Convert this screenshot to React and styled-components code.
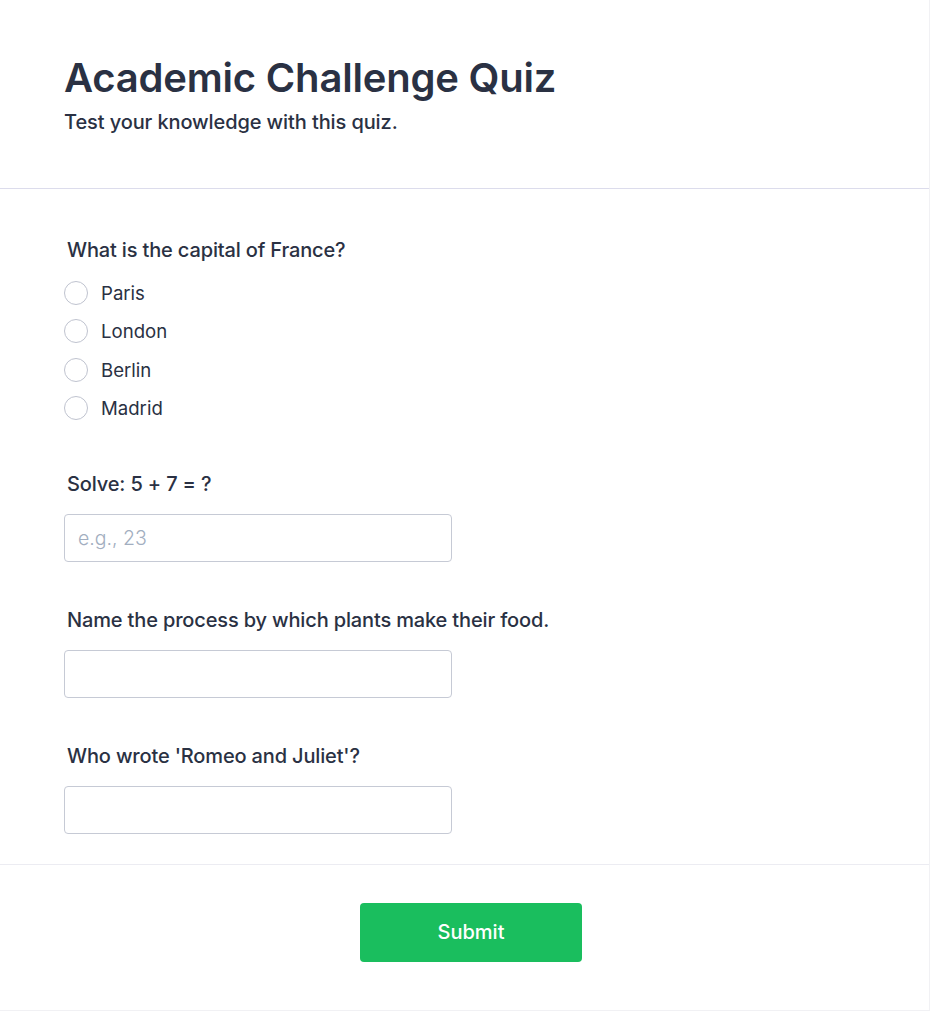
import React from "react";
import styled, { createGlobalStyle } from "styled-components";

const Global = createGlobalStyle`
  html, body { margin: 0; padding: 0; background: #ffffff; }
  body { font-family: Inter, "Noto Sans", Arial, sans-serif; color: #2d3748; }
  * { box-sizing: border-box; }
`;

const Card = styled.div`
  width: 930px;
  min-height: 1011px;
  background: #ffffff;
  border-right: 1px solid #f1f1f4;
  border-bottom: 1px solid #f1f1f4;
  display: flex;
  flex-direction: column;
`;

const Header = styled.header`
  padding: 52px 64px 51px 64px;
  border-bottom: 1px solid #dcdcec;
`;

const Title = styled.h1`
  margin: 0;
  font-size: 40px;
  line-height: 52px;
  font-weight: 600;
  color: #2a3143;
  letter-spacing: -0.2px;
`;

const Subtitle = styled.p`
  margin: 3px 0 0 0;
  font-size: 20px;
  line-height: 30px;
  font-weight: 500;
  letter-spacing: -0.1px;
  color: #2a3143;
`;

const Form = styled.section`
  padding: 46px 64px 30px 64px;
  border-bottom: 1px solid #ececf2;
  display: flex;
  flex-direction: column;
  gap: 43px;
`;

const Question = styled.div`
  display: flex;
  flex-direction: column;
  gap: 15px;
`;

const Label = styled.div`
  font-size: 20px;
  line-height: 30px;
  font-weight: 500;
  letter-spacing: -0.15px;
  color: #2a3143;
  padding-left: 3px;
`;

const Options = styled.div`
  display: flex;
  flex-direction: column;
  gap: 12.33px;
  padding-bottom: 5px;
`;

const Option = styled.label`
  display: flex;
  align-items: center;
  gap: 13px;
  height: 26px;
  font-size: 18.6px;
  font-weight: 400;
  color: #2a3143;
  cursor: pointer;
`;

const Radio = styled.span`
  width: 24px;
  height: 24px;
  border-radius: 50%;
  border: 1.5px solid #bfc3cf;
  background: #fff;
  flex-shrink: 0;
`;

const Input = styled.input`
  width: 388px;
  height: 48px;
  border: 1px solid #c6cad5;
  border-radius: 4px;
  padding: 0 13px;
  font-family: Inter, "Noto Sans", Arial, sans-serif;
  font-size: 19.5px;
  color: #2a3143;
  background: #fff;
  outline: none;
  &::placeholder {
    color: #a2aec0;
    font-weight: 300;
  }
`;

const Footer = styled.footer`
  padding: 38px 0 48px 13px;
  display: flex;
  justify-content: center;
`;

const Button = styled.button`
  width: 222px;
  height: 59px;
  border: none;
  border-radius: 4px;
  background: #1abe5e;
  color: #ffffff;
  font-family: Inter, "Noto Sans", Arial, sans-serif;
  font-size: 20px;
  font-weight: 500;
  cursor: pointer;
`;

const questions = [
  { type: "radio", label: "What is the capital of France?", options: ["Paris", "London", "Berlin", "Madrid"] },
  { type: "text", label: "Solve: 5 + 7 = ?", placeholder: "e.g., 23" },
  { type: "text", label: "Name the process by which plants make their food." },
  { type: "text", label: "Who wrote 'Romeo and Juliet'?" },
];

export default function App() {
  return (
    <>
      <Global />
      <Card>
        <Header>
          <Title>Academic Challenge Quiz</Title>
          <Subtitle>Test your knowledge with this quiz.</Subtitle>
        </Header>
        <Form>
          {questions.map((q, i) => (
            <Question key={i}>
              <Label>{q.label}</Label>
              {q.type === "radio" ? (
                <Options>
                  {q.options.map((o) => (
                    <Option key={o}>
                      <Radio />
                      {o}
                    </Option>
                  ))}
                </Options>
              ) : (
                <Input placeholder={q.placeholder || ""} />
              )}
            </Question>
          ))}
        </Form>
        <Footer>
          <Button>Submit</Button>
        </Footer>
      </Card>
    </>
  );
}
